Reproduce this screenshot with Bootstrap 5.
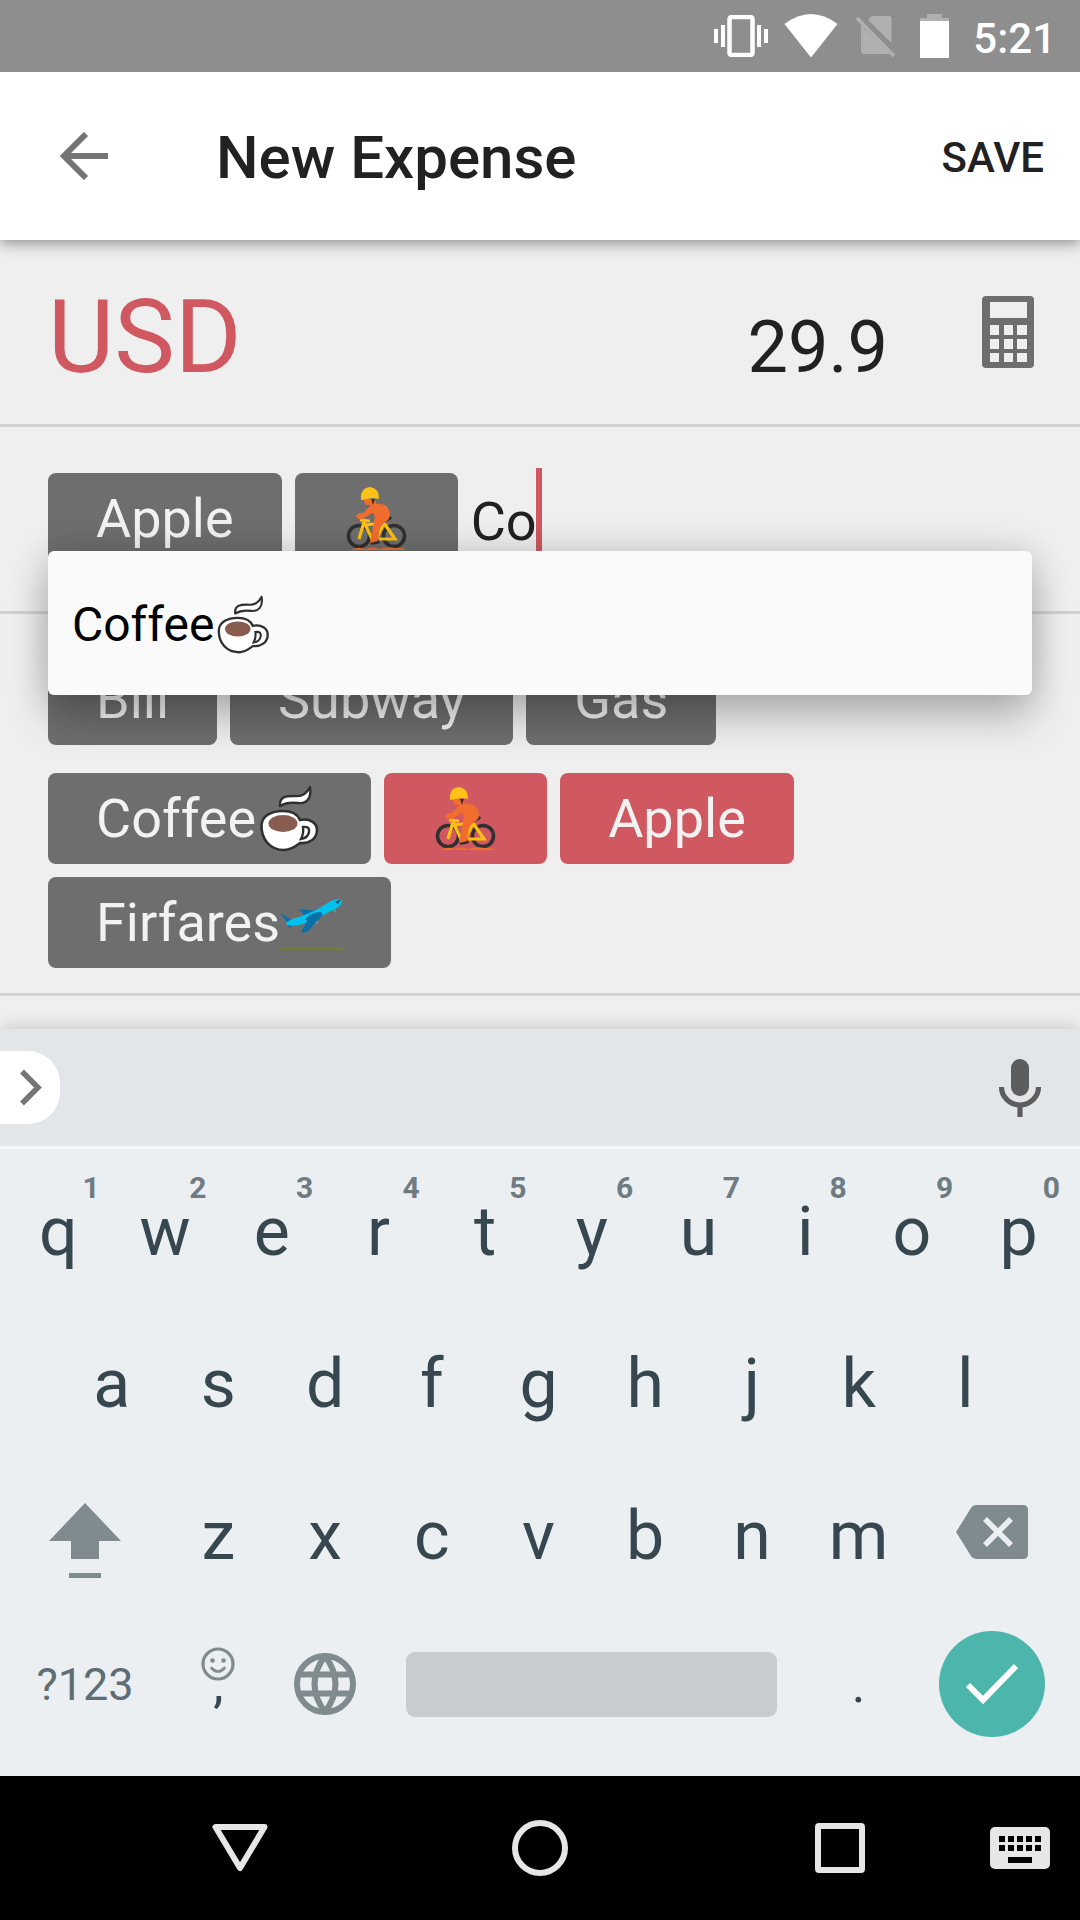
<!DOCTYPE html>
<html lang="en">
<head>
<meta charset="utf-8">
<meta name="viewport" content="width=device-width, initial-scale=1">
<title>New Expense</title>
<link href="https://cdn.jsdelivr.net/npm/bootstrap@5.3.0/dist/css/bootstrap.min.css" rel="stylesheet">
<style>
  body { font-family: Roboto, sans-serif; background: #efefef; color: #212121; line-height: normal; }
  button, input { font-family: inherit; color: inherit; background: none; border: 0; padding: 0; outline: 0; }
  svg { display: block; flex: none; }
  .status-bar { height: 72px; background: #8e8e8e; color: #fff; font-size: 42px; font-weight: 500; padding-right: 24px; z-index: 3; }
  .app-bar { height: 168px; background: #fff; padding: 0 36px 0 60px; box-shadow: 0 3px 14px rgba(0,0,0,.42); z-index: 2; }
  .app-bar h1 { font-size: 60px; font-weight: 500; margin: 0 0 0 108px; padding-top: 4px; }
  .save-btn { font-size: 42px; font-weight: 500; padding-top: 2px; }
  .form-line { border-bottom: 3px solid #d2d2d2; padding-left: 48px; padding-right: 48px; }
  .amount-line { height: 187px; padding-right: 46px; }
  .amount-pair { padding-top: 10px; }
  .calc-btn { margin-left: 94px; }
  .currency-btn { font-size: 102px; color: #d05860; line-height: 120px; }
  .amount-input { font-size: 72px; line-height: 84px; height: 84px; width: 400px; }
  .entry-line { height: 187px; padding-top: 41px; }
  .tag-gap { gap: 13px; }
  .tag-entry { padding-top: 5px; }
  .tag-chip { height: 91px; border-radius: 8px; padding: 0 48px; background: #6e6e6e; color: #f2f2f2; font-size: 54px; display: inline-flex; align-items: center; white-space: nowrap; }
  .tag-chip.on { background: #d05860; }
  .tag-input { font-size: 54px; height: 100px; width: 65px; padding-top: 6px; }
  .caret-bar { width: 6px; height: 100px; background: #d05860; }
  .suggest-box { position: absolute; top: 124px; left: 48px; right: 48px; z-index: 3; height: 144px; background: #fafafa; border-radius: 6px; font-size: 48px; padding: 3px 24px 0; color: #000;
    box-shadow: 0 24px 42px rgba(0,0,0,.22), 0 0 36px rgba(0,0,0,.16); }
  .tags-line { padding-top: 40px; padding-bottom: 25px; }
  .tags-line .tag-gap + .tag-gap { margin-top: 28px; }
  .keyboard { background: #ebeff2; color: #37474f; box-shadow: 0 0 18px rgba(0,0,0,.2); z-index: 1; padding-bottom: 20px; }
  .key-strip { height: 120px; background: #e2e6e9; border-bottom: 3px solid #f5f7f9; padding-right: 36px; }
  .expand-btn { width: 60px; height: 73px; background: #fff; border-radius: 0 32px 32px 0; padding-left: 19px; }
  .key-rows { padding: 7px 8px 0 5px; }
  .key-row { height: 152px; }
  .key-row.inset { padding: 0 5%; }
  .key-row.last { height: 144px; }
  .key { flex: 10 1 0; min-width: 0; height: 100%; font-size: 68px; display: flex; align-items: center; justify-content: center; position: relative; }
  .key.side { flex-grow: 15; }
  .key.bar { flex-grow: 40; }
  .key.bar span { flex: 1; margin: 0 28px; height: 65px; border-radius: 9px; background: #c8cccf; }
  .key.sym { font-size: 45px; color: #5f6e74; }
  .key.punct { font-size: 52px; }
  .key-num { position: absolute; top: 14px; right: 12px; font-size: 30px; font-weight: 700; color: #6e7b81; }
  .key-emoji { position: absolute; top: 35px; left: 50%; margin-left: -17px; }
  .done-key { width: 106px; height: 106px; border-radius: 50%; background: #4db6ac; }
  .nav-keys { height: 144px; background: #000; display: grid; grid-template-columns: 7fr 2fr 8fr 2fr 8fr 2fr 4fr 2fr 1fr; align-items: center; justify-items: center; }
  .nav-keys button:nth-child(1) { grid-column: 2; }
  .nav-keys button:nth-child(2) { grid-column: 4; }
  .nav-keys button:nth-child(3) { grid-column: 6; }
  .nav-keys button:nth-child(4) { grid-column: 8; }
</style>
<script src="https://cdn.jsdelivr.net/npm/bootstrap@5.3.0/dist/js/bootstrap.bundle.min.js"></script>
</head>
<body class="min-vh-100 d-flex flex-column overflow-x-hidden">

<svg width="0" height="0" class="position-absolute" aria-hidden="true">
  <symbol id="cup" viewBox="0 0 67 67">
    <path d="M24 21C23 10 33 11 39 11C47 12 51 8 54 2C56 14 50 19 42 18C34 17 29 18 24 21Z" fill="#fff" stroke="#303030" stroke-width="2.4" stroke-linejoin="round"/>
    <path d="M5.500 40C6 31 15 26 27 26C37 26 42 30 44 35C54 33 61 38 61 45C61 54 53 59 44 58C39 62 34 65 28 65C14 65 5 54 5.500 40Z" fill="#fff" stroke="#303030" stroke-width="2.600"/>
    <path d="M47 42Q54 41 53 47Q52 53 45 54Q48 48 47 42Z" fill="#fff" stroke="#303030" stroke-width="2.400"/>
    <ellipse cx="27" cy="38.500" rx="14.500" ry="8.500" fill="#895c50"/>
  </symbol>
  <symbol id="bike" viewBox="0 0 67 67">
    <g fill="none" stroke="#303030" stroke-width="3.600"><circle cx="16" cy="51" r="10.500"/><circle cx="51" cy="51" r="10.500"/></g>
    <path d="M41 36L47 33M29 58l6-1" stroke="#303030" stroke-width="3.500" stroke-linecap="round"/>
    <path d="M16 54L21 37L30 56M17 35L27 36M22 40L39 38M41 38L52 54H36M41 38L33 55" fill="none" stroke="#fdc010" stroke-width="3.200"/>
    <path d="M8 65Q15 61 23 64Q29 61 36 64Q45 61 52 63Q59 62 63 65Z" fill="#f06d2e"/>
    <path d="M20 14H32L33 19Q45 17 47 29Q47 35 42 37L37 42L35 56L27 58L31 37Q33 28 29 28L20 34L15 34L13 31L16 28L20 28L28 20L23 20Z" fill="#f06d2e"/>
    <path d="M28 14H32L30 20Z" fill="#403020"/>
    <path d="M18 15Q17 3 27 2Q36 3 36 14L30 13Z" fill="#fdc21a"/>
  </symbol>
  <symbol id="plane" viewBox="4 0 63 67">
    <path d="M23 20L43 22L38 27L28 26Z" fill="#0b70a8"/>
    <path d="M4 24L16 31L20 34L13 39L11 33Z" fill="#0b70a8"/>
    <path d="M10 34Q14 30 26 27L40 21L55 12Q61 9 66 11Q67 16 59 20L45 27L27 35Q17 38 12 36Q9 35 10 34Z" fill="#00c4ec"/>
    <path d="M29 30Q34 24 44 23Q48 24 45 28L32 42Q28 45 25 43L31 32Z" fill="#0b70a8"/>
    <path d="M59 13Q61 11 65 11L62 15Z" fill="#07527d"/>
    <path d="M57 22l3-2v4z" fill="#5a9aa6"/><path d="M39 34l3-3v4z" fill="#5a9aa6"/>
    <path d="M4 60H67" stroke="#6f8032" stroke-width="2.600"/>
  </symbol>
</svg>

<div class="status-bar d-flex align-items-center justify-content-end position-relative">
  <svg width="54" height="42" viewBox="0 0 54 42" fill="#fff"><path d="M0 14h4v14H0zM7 10h4v22H7zM43 10h4v22h-4zM50 14h4v14h-4z"/><rect x="15.500" y="2" width="23" height="38" rx="2" fill="none" stroke="#fff" stroke-width="4.500"/></svg>
  <svg class="ms-3" width="54" height="44" viewBox="0 0 54 44"><path d="M.5 10Q27-10 53.500 10L27 43.500Z" fill="#fff"/></svg>
  <svg class="ms-3" width="42" height="44" viewBox="0 0 42 44"><path d="M14 6L18 2H35Q37.500 2 37.500 5V29ZM7 11L36 40H10Q7 40 7 37Z" fill="#b0b0b0"/><path d="M3 4L40 42" stroke="#b0b0b0" stroke-width="3.500"/></svg>
  <svg class="ms-4" width="29" height="44" viewBox="0 0 29 44"><path d="M7 0h15v4h7v4H0V4h7z" fill="#b0b0b0"/><path d="M0 7h29v37H0z" fill="#fff"/></svg>
  <span class="ms-4 pt-1">5:21</span>
</div>

<header class="app-bar d-flex align-items-center position-relative">
  <button type="button" aria-label="Back"><svg width="48" height="48" viewBox="0 0 48 48" fill="none" stroke="#757575" stroke-width="6"><path d="M48 24H4M26 2L4 24L26 46"/></svg></button>
  <h1>New Expense</h1>
  <button type="submit" class="save-btn ms-auto">SAVE</button>
</header>

<main class="flex-grow-1">
  <div class="form-line amount-line d-flex align-items-center">
    <div class="amount-pair d-flex align-items-baseline justify-content-between flex-grow-1">
      <button type="button" class="currency-btn">USD</button>
      <input class="amount-input text-end" type="text" inputmode="decimal" aria-label="Amount" value="29.9">
    </div>
    <button type="button" class="calc-btn" aria-label="Calculator"><svg width="52" height="72" viewBox="0 0 52 72"><path fill="#6e6e6e" fill-rule="evenodd" d="M4 0h44q4 0 4 4v64q0 4-4 4H4q-4 0-4-4V4q0-4 4-4zM8 6v16h37V6zM8 29v10h9V29zM22 29v10h9V29zM35 29v10h10V29zM8 43v10h9V43zM22 43v10h9V43zM35 43v10h10V43zM8 57v9h9v-9zM22 57v9h9v-9zM35 57v9h10v-9z"/></svg></button>
  </div>

  <div class="form-line entry-line position-relative">
    <div class="d-flex tag-gap">
      <div class="tag-entry d-flex tag-gap">
        <button type="button" class="tag-chip">Apple</button>
        <button type="button" class="tag-chip" aria-label="Cycling"><svg width="67" height="67"><use href="#bike"/></svg></button>
      </div>
      <div class="d-flex">
        <input class="tag-input" type="text" aria-label="Tag" value="Co">
        <span class="caret-bar"></span>
      </div>
    </div>
    <button type="button" class="suggest-box d-flex align-items-center">Coffee<svg width="59" height="59"><use href="#cup"/></svg></button>
  </div>

  <div class="form-line tags-line">
    <div class="d-flex flex-wrap tag-gap">
      <button type="button" class="tag-chip">Bill</button>
      <button type="button" class="tag-chip">Subway</button>
      <button type="button" class="tag-chip">Gas</button>
    </div>
    <div class="d-flex flex-wrap tag-gap">
      <button type="button" class="tag-chip">Coffee<svg width="67" height="67"><use href="#cup"/></svg></button>
      <button type="button" class="tag-chip on" aria-label="Cycling"><svg width="67" height="67"><use href="#bike"/></svg></button>
      <button type="button" class="tag-chip on">Apple</button>
      <button type="button" class="tag-chip">Firfares<svg width="63" height="67"><use href="#plane"/></svg></button>
    </div>
  </div>
</main>

<section class="keyboard position-relative" aria-label="Keyboard">
  <div class="key-strip d-flex align-items-center justify-content-between">
    <button type="button" class="expand-btn" aria-label="Expand"><svg width="24" height="37" viewBox="0 0 24 37" fill="none" stroke="#757575" stroke-width="5.500"><path d="M3 2.500L19 18.500L3 34.500"/></svg></button>
    <button type="button" aria-label="Voice input"><svg width="48" height="58" viewBox="0 0 48 58"><rect x="15" y="0" width="18" height="37" rx="9" fill="#5c5d5f"/><path d="M5.500 28A18.500 18 0 0 0 42.500 28M24 46V58" fill="none" stroke="#5c5d5f" stroke-width="5.200"/></svg></button>
  </div>
  <div class="key-rows">
    <div class="key-row d-flex">
      <button class="key" type="button">q<span class="key-num">1</span></button>
      <button class="key" type="button">w<span class="key-num">2</span></button>
      <button class="key" type="button">e<span class="key-num">3</span></button>
      <button class="key" type="button">r<span class="key-num">4</span></button>
      <button class="key" type="button">t<span class="key-num">5</span></button>
      <button class="key" type="button">y<span class="key-num">6</span></button>
      <button class="key" type="button">u<span class="key-num">7</span></button>
      <button class="key" type="button">i<span class="key-num">8</span></button>
      <button class="key" type="button">o<span class="key-num">9</span></button>
      <button class="key" type="button">p<span class="key-num">0</span></button>
    </div>
    <div class="key-row inset d-flex">
      <button class="key" type="button">a</button>
      <button class="key" type="button">s</button>
      <button class="key" type="button">d</button>
      <button class="key" type="button">f</button>
      <button class="key" type="button">g</button>
      <button class="key" type="button">h</button>
      <button class="key" type="button">j</button>
      <button class="key" type="button">k</button>
      <button class="key" type="button">l</button>
    </div>
    <div class="key-row d-flex">
      <button class="key side" type="button" aria-label="Shift"><svg width="72" height="86" viewBox="0 -10 72 86" fill="#808b8f"><path d="M36 0L72 38H50V56H22V38H0ZM20 70H52V75H20Z"/></svg></button>
      <button class="key" type="button">z</button>
      <button class="key" type="button">x</button>
      <button class="key" type="button">c</button>
      <button class="key" type="button">v</button>
      <button class="key" type="button">b</button>
      <button class="key" type="button">n</button>
      <button class="key" type="button">m</button>
      <button class="key side" type="button" aria-label="Backspace"><svg width="72" height="62" viewBox="0 0 72 62"><path d="M20 0H67Q72 0 72 5V49Q72 54 67 54H20Q17 54 15 51L0 27L15 3Q17 0 20 0Z" fill="#808b8f"/><path d="M29 14L55 40M55 14L29 40" stroke="#ebeff2" stroke-width="5.500"/></svg></button>
    </div>
    <div class="key-row last d-flex">
      <button class="key side sym" type="button">?123</button>
      <button class="key punct" type="button">,<svg class="key-emoji" width="34" height="34" viewBox="0 0 34 34" fill="none" stroke="#808b8f"><circle cx="17" cy="17" r="15" stroke-width="3.200"/><path d="M10.500 21Q17 28 23.500 21" stroke-width="2.600" stroke-linecap="round"/><g fill="#808b8f" stroke="none"><circle cx="11.500" cy="13.500" r="2.300"/><circle cx="22.500" cy="13.500" r="2.300"/></g></svg></button>
      <button class="key" type="button" aria-label="Change language"><svg width="62" height="62" viewBox="0 0 62 62" fill="none" stroke="#808b8f" stroke-width="6"><circle cx="31" cy="31" r="28"/><path d="M5 21.500H57M5 40.500H57"/><path d="M31 3Q10 31 31 59Q52 31 31 3Z"/></svg></button>
      <button class="key bar" type="button" aria-label="Space"><span></span></button>
      <button class="key punct" type="button">.</button>
      <button class="key side" type="button" aria-label="Done"><span class="done-key d-flex align-items-center justify-content-center"><svg width="54" height="42" viewBox="0 0 54 42" fill="none" stroke="#fff" stroke-width="6"><path d="M3 22L18 37L51 3"/></svg></span></button>
    </div>
  </div>
</section>

<nav class="nav-keys" aria-label="System">
  <button type="button" aria-label="Back"><svg width="56" height="50" viewBox="0 0 56 50" fill="none" stroke="#e6e6e6" stroke-width="6" stroke-linejoin="round"><path d="M3.500 4H52.500L28 45Z"/></svg></button>
  <button type="button" aria-label="Home"><svg width="56" height="56" viewBox="0 0 56 56" fill="none" stroke="#e6e6e6" stroke-width="6"><circle cx="28" cy="28" r="25"/></svg></button>
  <button type="button" aria-label="Recent apps"><svg width="50" height="50" viewBox="0 0 50 50" fill="none" stroke="#e6e6e6" stroke-width="6"><rect x="3" y="3" width="44" height="44" rx="1"/></svg></button>
  <button type="button" aria-label="Choose keyboard"><svg width="60" height="42" viewBox="0 0 60 42"><rect width="60" height="42" rx="5" fill="#e6e6e6"/><path stroke="#000" stroke-width="6" stroke-dasharray="6 3" d="M9 12H51M9 21H51"/><path d="M18 30h24v6H18z"/></svg></button>
</nav>
</body>
</html>
